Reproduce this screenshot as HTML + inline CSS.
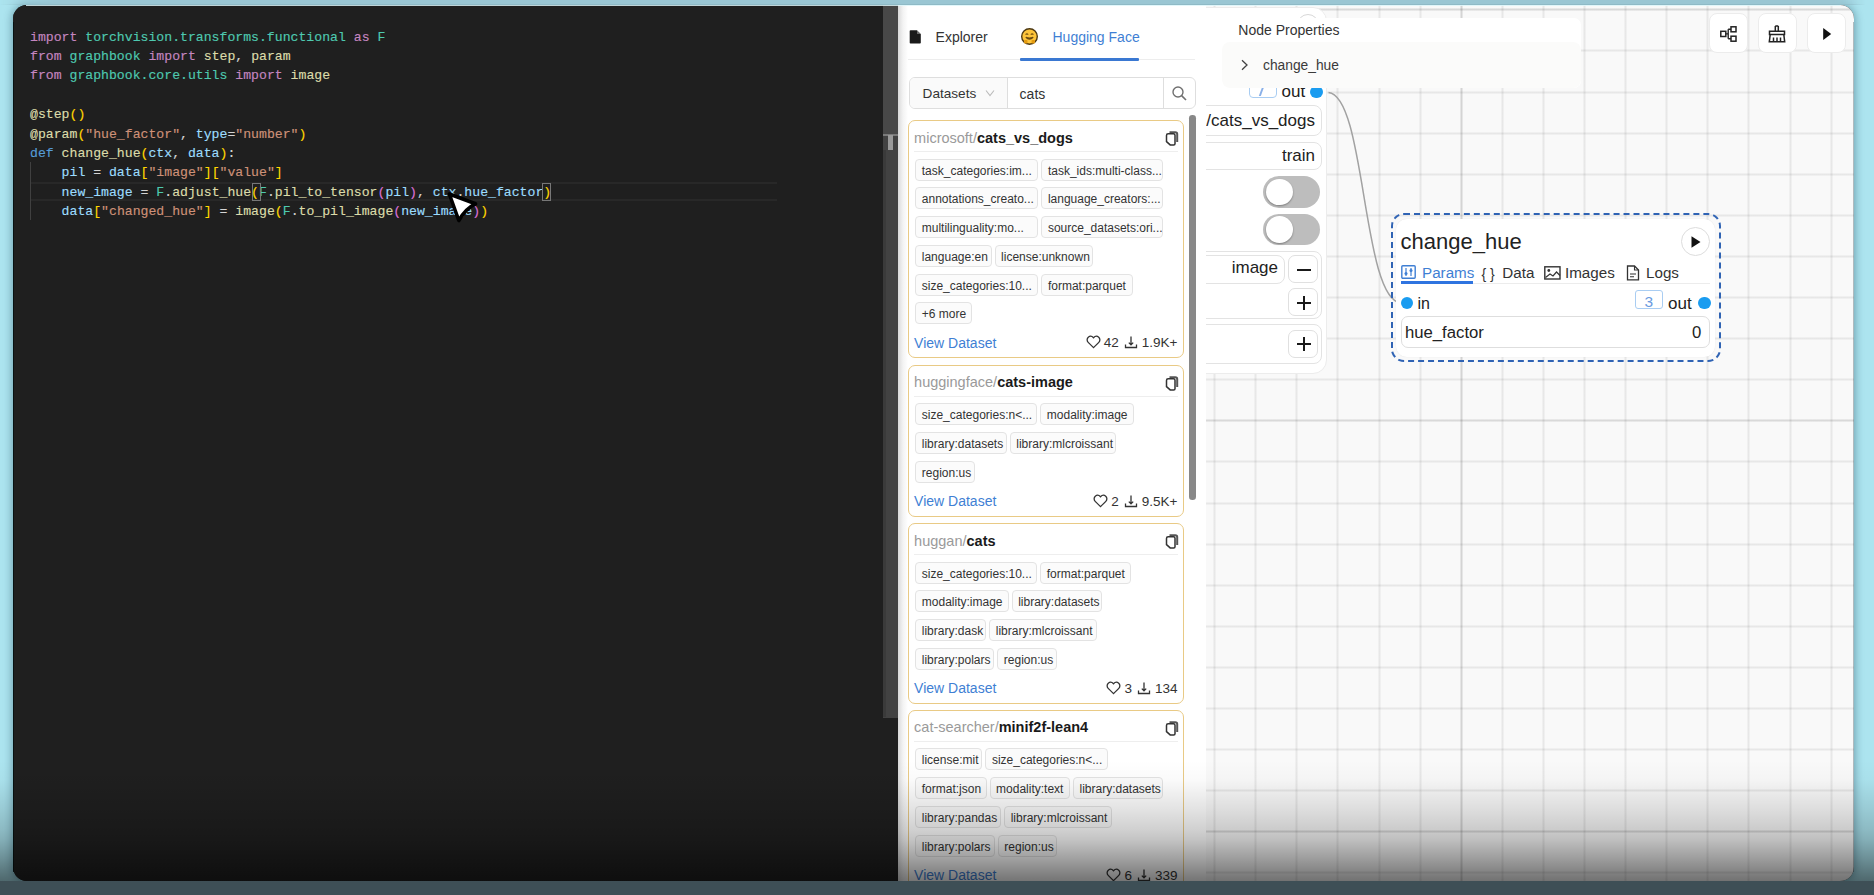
<!DOCTYPE html>
<html><head><meta charset="utf-8">
<style>
*{box-sizing:border-box}
html,body{margin:0;padding:0}
body{width:1874px;height:895px;overflow:hidden;position:relative;background:#ace4ef;font-family:"Liberation Sans",sans-serif}
.abs{position:absolute}
#bgtop{left:0;top:0;width:1874px;height:40px;background:linear-gradient(#93c2cf,#ace4ef)}
#win{left:13px;top:5px;width:1841px;height:876px;border-radius:14px;overflow:hidden;background:#1f1f1f;box-shadow:0 0 9px 1px rgba(10,50,70,.38)}
#editor{left:0;top:0;width:870px;height:876px;background:#1f1f1f}
.code{position:absolute;left:17px;top:0;font-family:"Liberation Mono",monospace;font-size:13.16px;line-height:19.35px;color:#d4d4d4;white-space:pre;-webkit-text-stroke:0.15px currentColor}
.kw{color:#c586c0}.md{color:#4ec9b0}.fn{color:#dcdcaa}.st{color:#ce9178}.vr{color:#9cdcfe}.df{color:#569cd6}.b1{color:#ffd700}.b2{color:#da70d6}.b3{color:#179fff}
#sbar{left:869.5px;top:0;width:15.5px;height:712.7px;background:#424242}
#side{left:885px;top:0;width:308px;height:876px;background:#fff}
#graph{left:1193px;top:0;width:648px;height:876px;background-color:#f9f9f9;overflow:hidden}
.t14{font-size:14px;line-height:18px;white-space:nowrap}
.card{width:276.6px;border:1.5px solid #e9ca85;border-radius:7px;background:#fff}
.ctitle{font-size:14.5px;line-height:18px;white-space:nowrap}
.ctitle b{font-weight:bold}
.tag{height:22px;border:1px solid #e3e3e3;border-radius:4px;background:#fbfbfb;font-size:12px;line-height:20px;padding-left:5.5px;padding-top:1px;color:#333;white-space:nowrap;overflow:hidden}
.vd{font-size:14px;line-height:18px;color:#3f7fd4;white-space:nowrap}
.stats{font-size:13.5px;line-height:18px;color:#333;white-space:nowrap}
.ntxt{font-size:17px;line-height:22px;color:#222;white-space:nowrap}
.ntxt2{font-size:16px;line-height:20px;color:#222;white-space:nowrap}
.ttab{top:257.6px;font-size:15.2px;line-height:20px;color:#333;white-space:nowrap}
.tog{width:57px;height:31.8px;border-radius:16px;background:#bdbdbd}
.knob{position:absolute;left:3px;top:2.6px;width:26.6px;height:26.6px;border-radius:50%;background:#fff;box-shadow:0 1px 2px rgba(0,0,0,.35)}
.nbtn{width:29.6px;border:1.8px solid #e0e0e0;border-radius:7px;background:#fff}
.dot{width:12.4px;height:12.4px;border-radius:50%;background:#1a9cf0}
.tbtn{width:39px;height:39.6px;background:#fff;border-radius:8px;border:1px solid #ececec}
</style></head><body>
<div id="win" class="abs">
  <div id="editor" class="abs">
    <div class="code" style="top:22.8px"><span class="kw">import</span> <span class="md">torchvision.transforms.functional</span> <span class="kw">as</span> <span class="md">F</span>
<span class="kw">from</span> <span class="md">graphbook</span> <span class="kw">import</span> <span class="fn">step</span>, <span class="fn">param</span>
<span class="kw">from</span> <span class="md">graphbook.core.utils</span> <span class="kw">import</span> <span class="fn">image</span>

<span class="fn">@step</span><span class="b1">()</span>
<span class="fn">@param</span><span class="b1">(</span><span class="st">"hue_factor"</span>, <span class="vr">type</span>=<span class="st">"number"</span><span class="b1">)</span>
<span class="df">def</span> <span class="fn">change_hue</span><span class="b1">(</span><span class="vr">ctx</span>, <span class="vr">data</span><span class="b1">)</span>:
    <span class="vr">pil</span> = <span class="vr">data</span><span class="b1">[</span><span class="st">"image"</span><span class="b1">][</span><span class="st">"value"</span><span class="b1">]</span>
    <span class="vr">new_image</span> = <span class="md">F</span>.<span class="fn">adjust_hue</span><span class="b1">(</span><span class="md">F</span>.<span class="fn">pil_to_tensor</span><span class="b2">(</span><span class="vr">pil</span><span class="b2">)</span>, <span class="vr">ctx</span>.<span class="vr">hue_factor</span><span class="b1">)</span>
    <span class="vr">data</span><span class="b1">[</span><span class="st">"changed_hue"</span><span class="b1">]</span> = <span class="fn">image</span><span class="b1">(</span><span class="md">F</span>.<span class="fn">to_pil_image</span><span class="b2">(</span><span class="vr">new_image</span><span class="b2">)</span><span class="b1">)</span>
</div>
    <div class="abs" style="left:17px;top:176.6px;width:747px;height:2px;background:#282828"></div>
    <div class="abs" style="left:17px;top:193.8px;width:747px;height:2px;background:#282828"></div>
    <div class="abs" style="left:17px;top:157px;width:1px;height:58px;background:#404040"></div>
    <div class="abs" style="left:238.8px;top:177.5px;width:9px;height:18px;border:1px solid #777"></div>
    <div class="abs" style="left:528.8px;top:177.5px;width:9px;height:18px;border:1px solid #777"></div>
    <svg class="abs" style="left:427px;top:180px" width="45" height="45" viewBox="0 0 45 45"><path d="M9.3 9L35.5 18.8Q25.5 23.5 18.8 35.5Z" fill="#fff" stroke="#000" stroke-width="3.6" stroke-linejoin="round"/></svg>
  </div>
  <div id="sbar" class="abs"><div class="abs" style="left:0;top:0;width:15.5px;height:129.5px;background:#484848"></div><div class="abs" style="left:0;top:129.3px;width:15.5px;height:1.8px;background:#7a7a7a"></div><div class="abs" style="left:5.5px;top:129.5px;width:5px;height:15.5px;background:#9a9a9a"></div><div class="abs" style="left:0;top:145px;width:3px;height:567px;background:#3a3a3a"></div></div>
  <div id="side" class="abs">
    <div class="abs" style="left:0;top:0;width:10px;height:876px;background:linear-gradient(90deg,#d9d9d9,#f3f3f3 50%,#fff)"></div>
    <svg class="abs" style="left:11px;top:24.2px" width="13" height="15" viewBox="0 0 13 15"><path d="M1.5 1.2h6.5l3.8 3.8v8.8c0 .5-.4.8-.8.8H1.5c-.5 0-.8-.3-.8-.8V2c0-.5.3-.8.8-.8z" fill="#1a1a1a"/><path d="M8 1.2v3.8h3.8" fill="#fff" opacity=".35"/></svg>
    <div class="abs t14" style="left:37.6px;top:23px;color:#333">Explorer</div>
    <svg class="abs" style="left:122px;top:22px" width="19" height="19" viewBox="0 0 19 19"><circle cx="9.5" cy="9.5" r="7.8" fill="#fdc43a" stroke="#4e3a14" stroke-width="1.4"/><path d="M5.6 7.6q1.3-1.4 2.6 0M10.8 7.6q1.3-1.4 2.6 0" stroke="#7a5510" stroke-width="1.3" fill="none"/><path d="M5.8 10.2q3.7 3.6 7.4 0q-3.7 1.6-7.4 0z" stroke="#6a4a10" stroke-width="1.2" fill="#6a4a10"/><rect x="4" y="13" width="3.5" height="3.5" rx="1" fill="#e39a10"/><rect x="11.5" y="13" width="3.5" height="3.5" rx="1" fill="#e39a10"/></svg>
    <div class="abs t14" style="left:154.5px;top:23px;color:#3f7fd4">Hugging Face</div>
    <div class="abs" style="left:10px;top:54px;width:287px;height:1px;background:#ededed"></div>
    <div class="abs" style="left:122.3px;top:53px;width:119px;height:2.5px;background:#3a78d2;border-radius:1px"></div>
    <div class="abs" style="left:10.6px;top:72px;width:287px;height:32px;border:1px solid #dedede;border-radius:6px;overflow:hidden">
      <div class="abs" style="left:0;top:0;width:98.2px;height:30px;background:#fafafa;border-right:1px solid #dedede"></div>
      <div class="abs t14" style="left:13px;top:7px;color:#333;font-size:13.6px">Datasets</div>
      <svg class="abs" style="left:75px;top:10.5px" width="10" height="9" viewBox="0 0 10 9"><path d="M1 1.5l4 5 4-5" stroke="#bbb" stroke-width="1.1" fill="none"/></svg>
      <div class="abs t14" style="left:110px;top:7px;color:#333;font-size:14px">cats</div>
      <div class="abs" style="left:253px;top:0;width:1px;height:30px;background:#dedede"></div>
      <svg class="abs" style="left:261.3px;top:7px" width="17" height="17" viewBox="0 0 17 17"><circle cx="7" cy="7" r="5" stroke="#707070" stroke-width="1.4" fill="none"/><path d="M10.6 10.6l4.4 4.4" stroke="#707070" stroke-width="1.6"/></svg>
    </div>
    <div class="abs" style="left:291.3px;top:110px;width:6.6px;height:385px;background:#888;border-radius:3.3px"></div>
<div class="card abs" style="left:9.9px;top:115.4px;height:237.8px"><div class="abs ctitle" style="left:5.2px;top:7.3px"><span style="color:#9a9a9a">microsoft/</span><b style="color:#1a1a1a">cats_vs_dogs</b></div><svg class="abs" style="left:256px;top:9px" width="14" height="16" viewBox="0 0 14 16"><path d="M4.5 2.2h5.8c1 0 1.9.8 1.9 1.8v8" stroke="#555" stroke-width="2" fill="none"/><path d="M3.2 3.8h5.3c.9 0 1.5.6 1.5 1.5v8.4c0 .8-.6 1.2-1.3 1.2H5.2L1.5 11.6V5.4c0-.9.8-1.6 1.7-1.6z" stroke="#333" stroke-width="1.5" fill="#fff"/></svg><div class="abs" style="left:5px;top:29.5px;width:264px;height:1px;background:#eee"></div><div class="tag abs" style="left:6.4px;top:37.4px;width:123.1px">task_categories:im...</div><div class="tag abs" style="left:132.5px;top:37.4px;width:122.1px">task_ids:multi-class...</div><div class="tag abs" style="left:6.4px;top:66.1px;width:123.1px">annotations_creato...</div><div class="tag abs" style="left:132.5px;top:66.1px;width:122.1px">language_creators:...</div><div class="tag abs" style="left:6.4px;top:94.8px;width:123.1px">multilinguality:mo...</div><div class="tag abs" style="left:132.5px;top:94.8px;width:122.1px">source_datasets:ori...</div><div class="tag abs" style="left:6.4px;top:123.5px;width:76.3px">language:en</div><div class="tag abs" style="left:85.7px;top:123.5px;width:98.6px">license:unknown</div><div class="tag abs" style="left:6.4px;top:152.2px;width:123.1px">size_categories:10...</div><div class="tag abs" style="left:132.5px;top:152.2px;width:91.4px">format:parquet</div><div class="tag abs" style="left:6.4px;top:180.9px;width:57.2px">+6 more</div><div class="abs vd" style="left:5.2px;top:212.3px">View Dataset</div><div class="abs stats" style="right:6px;top:212.9px"><svg width="15" height="14" viewBox="0 0 15 14" style="vertical-align:-2px"><path d="M7.5 12.6L2.2 7.4C.7 5.9.8 3.5 2.3 2.2 3.8.9 6 1.1 7.5 2.8 9 1.1 11.2.9 12.7 2.2c1.5 1.3 1.6 3.7.1 5.2z" stroke="#333" stroke-width="1.3" fill="none"/></svg><span style="margin:0 5px 0 3px">42</span><svg width="14" height="14" viewBox="0 0 14 14" style="vertical-align:-2px"><path d="M7 1.5v8M4.8 7.6L7 9.8l2.2-2.2M1.5 9.5v3h11v-3" stroke="#333" stroke-width="1.3" fill="none"/></svg><span style="margin-left:4px">1.9K+</span></div></div>
<div class="card abs" style="left:9.9px;top:360.0px;height:151.7px"><div class="abs ctitle" style="left:5.2px;top:7.3px"><span style="color:#9a9a9a">huggingface/</span><b style="color:#1a1a1a">cats-image</b></div><svg class="abs" style="left:256px;top:9px" width="14" height="16" viewBox="0 0 14 16"><path d="M4.5 2.2h5.8c1 0 1.9.8 1.9 1.8v8" stroke="#555" stroke-width="2" fill="none"/><path d="M3.2 3.8h5.3c.9 0 1.5.6 1.5 1.5v8.4c0 .8-.6 1.2-1.3 1.2H5.2L1.5 11.6V5.4c0-.9.8-1.6 1.7-1.6z" stroke="#333" stroke-width="1.5" fill="#fff"/></svg><div class="abs" style="left:5px;top:29.5px;width:264px;height:1px;background:#eee"></div><div class="tag abs" style="left:6.4px;top:37.4px;width:122.0px">size_categories:n&lt;...</div><div class="tag abs" style="left:131.4px;top:37.4px;width:93.4px">modality:image</div><div class="tag abs" style="left:6.4px;top:66.1px;width:91.5px">library:datasets</div><div class="tag abs" style="left:100.9px;top:66.1px;width:106.7px">library:mlcroissant</div><div class="tag abs" style="left:6.4px;top:94.8px;width:59.6px">region:us</div><div class="abs vd" style="left:5.2px;top:126.2px">View Dataset</div><div class="abs stats" style="right:6px;top:126.8px"><svg width="15" height="14" viewBox="0 0 15 14" style="vertical-align:-2px"><path d="M7.5 12.6L2.2 7.4C.7 5.9.8 3.5 2.3 2.2 3.8.9 6 1.1 7.5 2.8 9 1.1 11.2.9 12.7 2.2c1.5 1.3 1.6 3.7.1 5.2z" stroke="#333" stroke-width="1.3" fill="none"/></svg><span style="margin:0 5px 0 3px">2</span><svg width="14" height="14" viewBox="0 0 14 14" style="vertical-align:-2px"><path d="M7 1.5v8M4.8 7.6L7 9.8l2.2-2.2M1.5 9.5v3h11v-3" stroke="#333" stroke-width="1.3" fill="none"/></svg><span style="margin-left:4px">9.5K+</span></div></div>
<div class="card abs" style="left:9.9px;top:518.3px;height:180.4px"><div class="abs ctitle" style="left:5.2px;top:7.3px"><span style="color:#9a9a9a">huggan/</span><b style="color:#1a1a1a">cats</b></div><svg class="abs" style="left:256px;top:9px" width="14" height="16" viewBox="0 0 14 16"><path d="M4.5 2.2h5.8c1 0 1.9.8 1.9 1.8v8" stroke="#555" stroke-width="2" fill="none"/><path d="M3.2 3.8h5.3c.9 0 1.5.6 1.5 1.5v8.4c0 .8-.6 1.2-1.3 1.2H5.2L1.5 11.6V5.4c0-.9.8-1.6 1.7-1.6z" stroke="#333" stroke-width="1.5" fill="#fff"/></svg><div class="abs" style="left:5px;top:29.5px;width:264px;height:1px;background:#eee"></div><div class="tag abs" style="left:6.4px;top:37.4px;width:122.0px">size_categories:10...</div><div class="tag abs" style="left:131.4px;top:37.4px;width:91.0px">format:parquet</div><div class="tag abs" style="left:6.4px;top:66.1px;width:93.4px">modality:image</div><div class="tag abs" style="left:102.8px;top:66.1px;width:90.4px">library:datasets</div><div class="tag abs" style="left:6.4px;top:94.8px;width:71.0px">library:dask</div><div class="tag abs" style="left:80.4px;top:94.8px;width:107.9px">library:mlcroissant</div><div class="tag abs" style="left:6.4px;top:123.5px;width:79.0px">library:polars</div><div class="tag abs" style="left:88.4px;top:123.5px;width:60.0px">region:us</div><div class="abs vd" style="left:5.2px;top:154.9px">View Dataset</div><div class="abs stats" style="right:6px;top:155.5px"><svg width="15" height="14" viewBox="0 0 15 14" style="vertical-align:-2px"><path d="M7.5 12.6L2.2 7.4C.7 5.9.8 3.5 2.3 2.2 3.8.9 6 1.1 7.5 2.8 9 1.1 11.2.9 12.7 2.2c1.5 1.3 1.6 3.7.1 5.2z" stroke="#333" stroke-width="1.3" fill="none"/></svg><span style="margin:0 5px 0 3px">3</span><svg width="14" height="14" viewBox="0 0 14 14" style="vertical-align:-2px"><path d="M7 1.5v8M4.8 7.6L7 9.8l2.2-2.2M1.5 9.5v3h11v-3" stroke="#333" stroke-width="1.3" fill="none"/></svg><span style="margin-left:4px">134</span></div></div>
<div class="card abs" style="left:9.9px;top:705.0px;height:180.4px"><div class="abs ctitle" style="left:5.2px;top:7.3px"><span style="color:#9a9a9a">cat-searcher/</span><b style="color:#1a1a1a">minif2f-lean4</b></div><svg class="abs" style="left:256px;top:9px" width="14" height="16" viewBox="0 0 14 16"><path d="M4.5 2.2h5.8c1 0 1.9.8 1.9 1.8v8" stroke="#555" stroke-width="2" fill="none"/><path d="M3.2 3.8h5.3c.9 0 1.5.6 1.5 1.5v8.4c0 .8-.6 1.2-1.3 1.2H5.2L1.5 11.6V5.4c0-.9.8-1.6 1.7-1.6z" stroke="#333" stroke-width="1.5" fill="#fff"/></svg><div class="abs" style="left:5px;top:29.5px;width:264px;height:1px;background:#eee"></div><div class="tag abs" style="left:6.4px;top:37.4px;width:67.1px">license:mit</div><div class="tag abs" style="left:76.5px;top:37.4px;width:122.8px">size_categories:n&lt;...</div><div class="tag abs" style="left:6.4px;top:66.1px;width:71.3px">format:json</div><div class="tag abs" style="left:80.7px;top:66.1px;width:80.4px">modality:text</div><div class="tag abs" style="left:164.1px;top:66.1px;width:90.5px">library:datasets</div><div class="tag abs" style="left:6.4px;top:94.8px;width:85.9px">library:pandas</div><div class="tag abs" style="left:95.3px;top:94.8px;width:108.1px">library:mlcroissant</div><div class="tag abs" style="left:6.4px;top:123.5px;width:79.5px">library:polars</div><div class="tag abs" style="left:88.9px;top:123.5px;width:59.1px">region:us</div><div class="abs vd" style="left:5.2px;top:154.9px">View Dataset</div><div class="abs stats" style="right:6px;top:155.5px"><svg width="15" height="14" viewBox="0 0 15 14" style="vertical-align:-2px"><path d="M7.5 12.6L2.2 7.4C.7 5.9.8 3.5 2.3 2.2 3.8.9 6 1.1 7.5 2.8 9 1.1 11.2.9 12.7 2.2c1.5 1.3 1.6 3.7.1 5.2z" stroke="#333" stroke-width="1.3" fill="none"/></svg><span style="margin:0 5px 0 3px">6</span><svg width="14" height="14" viewBox="0 0 14 14" style="vertical-align:-2px"><path d="M7 1.5v8M4.8 7.6L7 9.8l2.2-2.2M1.5 9.5v3h11v-3" stroke="#333" stroke-width="1.3" fill="none"/></svg><span style="margin-left:4px">339</span></div></div>
  </div>
  <div id="graph" class="abs"><div class="abs" style="left:7.1px;top:0;width:3px;height:876px;background:linear-gradient(90deg,rgba(0,0,0,.02),rgba(0,0,0,.07),rgba(0,0,0,.02))"></div><div class="abs" style="left:48.2px;top:0;width:3px;height:876px;background:linear-gradient(90deg,rgba(0,0,0,.02),rgba(0,0,0,.07),rgba(0,0,0,.02))"></div><div class="abs" style="left:89.3px;top:0;width:3px;height:876px;background:linear-gradient(90deg,rgba(0,0,0,.02),rgba(0,0,0,.07),rgba(0,0,0,.02))"></div><div class="abs" style="left:130.4px;top:0;width:3px;height:876px;background:linear-gradient(90deg,rgba(0,0,0,.02),rgba(0,0,0,.07),rgba(0,0,0,.02))"></div><div class="abs" style="left:171.5px;top:0;width:3px;height:876px;background:linear-gradient(90deg,rgba(0,0,0,.02),rgba(0,0,0,.07),rgba(0,0,0,.02))"></div><div class="abs" style="left:212.6px;top:0;width:3px;height:876px;background:linear-gradient(90deg,rgba(0,0,0,.02),rgba(0,0,0,.07),rgba(0,0,0,.02))"></div><div class="abs" style="left:253.7px;top:0;width:3px;height:876px;background:linear-gradient(90deg,rgba(0,0,0,.04),rgba(0,0,0,.15),rgba(0,0,0,.04))"></div><div class="abs" style="left:294.8px;top:0;width:3px;height:876px;background:linear-gradient(90deg,rgba(0,0,0,.02),rgba(0,0,0,.07),rgba(0,0,0,.02))"></div><div class="abs" style="left:335.9px;top:0;width:3px;height:876px;background:linear-gradient(90deg,rgba(0,0,0,.02),rgba(0,0,0,.07),rgba(0,0,0,.02))"></div><div class="abs" style="left:377.0px;top:0;width:3px;height:876px;background:linear-gradient(90deg,rgba(0,0,0,.02),rgba(0,0,0,.07),rgba(0,0,0,.02))"></div><div class="abs" style="left:418.1px;top:0;width:3px;height:876px;background:linear-gradient(90deg,rgba(0,0,0,.02),rgba(0,0,0,.07),rgba(0,0,0,.02))"></div><div class="abs" style="left:459.2px;top:0;width:3px;height:876px;background:linear-gradient(90deg,rgba(0,0,0,.02),rgba(0,0,0,.07),rgba(0,0,0,.02))"></div><div class="abs" style="left:500.3px;top:0;width:3px;height:876px;background:linear-gradient(90deg,rgba(0,0,0,.02),rgba(0,0,0,.07),rgba(0,0,0,.02))"></div><div class="abs" style="left:541.4px;top:0;width:3px;height:876px;background:linear-gradient(90deg,rgba(0,0,0,.02),rgba(0,0,0,.07),rgba(0,0,0,.02))"></div><div class="abs" style="left:582.5px;top:0;width:3px;height:876px;background:linear-gradient(90deg,rgba(0,0,0,.02),rgba(0,0,0,.07),rgba(0,0,0,.02))"></div><div class="abs" style="left:623.6px;top:0;width:3px;height:876px;background:linear-gradient(90deg,rgba(0,0,0,.02),rgba(0,0,0,.07),rgba(0,0,0,.02))"></div><div class="abs" style="left:0;top:3.3px;width:648px;height:3px;background:linear-gradient(rgba(0,0,0,.035),rgba(0,0,0,.13),rgba(0,0,0,.035))"></div><div class="abs" style="left:0;top:44.4px;width:648px;height:3px;background:linear-gradient(rgba(0,0,0,.02),rgba(0,0,0,.07),rgba(0,0,0,.02))"></div><div class="abs" style="left:0;top:85.5px;width:648px;height:3px;background:linear-gradient(rgba(0,0,0,.02),rgba(0,0,0,.07),rgba(0,0,0,.02))"></div><div class="abs" style="left:0;top:126.6px;width:648px;height:3px;background:linear-gradient(rgba(0,0,0,.02),rgba(0,0,0,.07),rgba(0,0,0,.02))"></div><div class="abs" style="left:0;top:167.7px;width:648px;height:3px;background:linear-gradient(rgba(0,0,0,.02),rgba(0,0,0,.07),rgba(0,0,0,.02))"></div><div class="abs" style="left:0;top:208.8px;width:648px;height:3px;background:linear-gradient(rgba(0,0,0,.02),rgba(0,0,0,.07),rgba(0,0,0,.02))"></div><div class="abs" style="left:0;top:249.9px;width:648px;height:3px;background:linear-gradient(rgba(0,0,0,.02),rgba(0,0,0,.07),rgba(0,0,0,.02))"></div><div class="abs" style="left:0;top:291.0px;width:648px;height:3px;background:linear-gradient(rgba(0,0,0,.02),rgba(0,0,0,.07),rgba(0,0,0,.02))"></div><div class="abs" style="left:0;top:332.1px;width:648px;height:3px;background:linear-gradient(rgba(0,0,0,.02),rgba(0,0,0,.07),rgba(0,0,0,.02))"></div><div class="abs" style="left:0;top:373.2px;width:648px;height:3px;background:linear-gradient(rgba(0,0,0,.02),rgba(0,0,0,.07),rgba(0,0,0,.02))"></div><div class="abs" style="left:0;top:414.3px;width:648px;height:3px;background:linear-gradient(rgba(0,0,0,.035),rgba(0,0,0,.13),rgba(0,0,0,.035))"></div><div class="abs" style="left:0;top:455.4px;width:648px;height:3px;background:linear-gradient(rgba(0,0,0,.02),rgba(0,0,0,.07),rgba(0,0,0,.02))"></div><div class="abs" style="left:0;top:496.5px;width:648px;height:3px;background:linear-gradient(rgba(0,0,0,.02),rgba(0,0,0,.07),rgba(0,0,0,.02))"></div><div class="abs" style="left:0;top:537.6px;width:648px;height:3px;background:linear-gradient(rgba(0,0,0,.02),rgba(0,0,0,.07),rgba(0,0,0,.02))"></div><div class="abs" style="left:0;top:578.7px;width:648px;height:3px;background:linear-gradient(rgba(0,0,0,.02),rgba(0,0,0,.07),rgba(0,0,0,.02))"></div><div class="abs" style="left:0;top:619.8px;width:648px;height:3px;background:linear-gradient(rgba(0,0,0,.02),rgba(0,0,0,.07),rgba(0,0,0,.02))"></div><div class="abs" style="left:0;top:660.9px;width:648px;height:3px;background:linear-gradient(rgba(0,0,0,.02),rgba(0,0,0,.07),rgba(0,0,0,.02))"></div><div class="abs" style="left:0;top:702.0px;width:648px;height:3px;background:linear-gradient(rgba(0,0,0,.02),rgba(0,0,0,.07),rgba(0,0,0,.02))"></div><div class="abs" style="left:0;top:743.1px;width:648px;height:3px;background:linear-gradient(rgba(0,0,0,.02),rgba(0,0,0,.07),rgba(0,0,0,.02))"></div><div class="abs" style="left:0;top:784.2px;width:648px;height:3px;background:linear-gradient(rgba(0,0,0,.02),rgba(0,0,0,.07),rgba(0,0,0,.02))"></div><div class="abs" style="left:0;top:825.3px;width:648px;height:3px;background:linear-gradient(rgba(0,0,0,.035),rgba(0,0,0,.13),rgba(0,0,0,.035))"></div><div class="abs" style="left:0;top:866.4px;width:648px;height:3px;background:linear-gradient(rgba(0,0,0,.02),rgba(0,0,0,.07),rgba(0,0,0,.02))"></div>
    <!-- left node -->
    <div class="abs" style="left:-20px;top:1.5px;width:141.3px;height:367.1px;background:#fff;border-radius:14px;border:1px solid #ececec"></div>
    <div class="abs" style="left:91.0px;top:8.5px;width:22px;height:22px;border:1.5px solid #d8d8d8;border-radius:50%"></div>
    <div class="abs" style="left:-20px;top:99.8px;width:135.6px;height:31.2px;border:1.8px solid #e3e3e3;border-radius:8px"></div>
    <div class="abs ntxt" style="right:539.0px;top:104.6px">/cats_vs_dogs</div>
    <div class="abs" style="left:-20px;top:136.6px;width:135.6px;height:28.8px;border:1.8px solid #e3e3e3;border-radius:8px"></div>
    <div class="abs ntxt" style="right:539.0px;top:139.5px">train</div>
    <div class="abs tog" style="left:57.4px;top:171.3px"><div class="knob"></div></div>
    <div class="abs tog" style="left:57.4px;top:208.7px"><div class="knob"></div></div>
    <div class="abs" style="left:-20px;top:245.7px;width:136.0px;height:68.2px;border:1.8px solid #e3e3e3;border-radius:8px"></div>
    <div class="abs" style="left:-20px;top:249.8px;width:98.5px;height:29.1px;border:1.8px solid #e3e3e3;border-radius:8px"></div>
    <div class="abs ntxt" style="right:576.0px;top:252.0px">image</div>
    <div class="abs nbtn" style="left:82.4px;top:249.8px;height:28.5px"><div class="abs" style="left:7.5px;top:13px;width:14px;height:1.8px;background:#1a1a1a"></div></div>
    <div class="abs nbtn" style="left:82.4px;top:283.4px;height:27.5px"><div class="abs" style="left:7.5px;top:12.5px;width:14px;height:1.8px;background:#1a1a1a"></div><div class="abs" style="left:13.6px;top:6.5px;width:1.8px;height:14px;background:#1a1a1a"></div></div>
    <div class="abs" style="left:-20px;top:319.2px;width:136.0px;height:40px;border:1.8px solid #e3e3e3;border-radius:8px"></div>
    <div class="abs nbtn" style="left:82.4px;top:324.5px;height:28px"><div class="abs" style="left:7.5px;top:12.6px;width:14px;height:1.8px;background:#1a1a1a"></div><div class="abs" style="left:13.6px;top:6.5px;width:1.8px;height:14px;background:#1a1a1a"></div></div>
    <div class="abs" style="left:43.0px;top:78.0px;width:28px;height:14.6px;border:1.6px solid #a9cdf2;border-radius:4px"></div>
    <div class="abs" style="left:55.0px;top:79.0px;width:2px;height:12px;background:#8ab0e8;transform:skewX(-20deg)"></div>
    <div class="abs ntxt" style="left:75.5px;top:75.5px;font-size:17px">out</div>
    <div class="abs dot" style="left:104.4px;top:80.9px"></div>
    <!-- edge -->
    <svg class="abs" style="left:0;top:0" width="648" height="876"><path d="M122.5 87.5 C 160.0 91.0, 156.0 295.0, 195.0 298.0" stroke="#a2a2a2" stroke-width="1.5" fill="none"/></svg>
    <!-- node properties -->
    <div class="abs" style="left:16.0px;top:12.8px;width:358.8px;height:69.8px;background:#fff;border-radius:7px;overflow:hidden">
      <div class="abs" style="left:0;top:24.0px;width:100%;height:45.8px;background:#fbfbfa;border-radius:8px"></div>
    </div>
    <div class="abs" style="left:32.3px;top:16.0px;font-size:14px;line-height:18px;color:#333;white-space:nowrap">Node Properties</div>
    <svg class="abs" style="left:33.5px;top:54.0px" width="10" height="12" viewBox="0 0 10 12"><path d="M2 1.2l5 4.8-5 4.8" stroke="#444" stroke-width="1.3" fill="none"/></svg>
    <div class="abs" style="left:57.0px;top:51.8px;font-size:13.8px;line-height:18px;color:#3a3a3a;white-space:nowrap">change_hue</div>
    <!-- change_hue node -->
    <div class="abs" style="left:184.5px;top:208.2px;width:330.9px;height:149.2px;border:2.2px dashed #2f63b4;border-radius:13px"></div>
    <div class="abs" style="left:190.0px;top:214.0px;width:319.0px;height:138.0px;background:#fff;border-radius:11px;box-shadow:0 0 1px rgba(0,0,0,.12)"></div>
    <div class="abs" style="left:194.5px;top:224.1px;font-size:22px;line-height:26px;color:#222;white-space:nowrap">change_hue</div>
    <div class="abs" style="left:474.5px;top:221.6px;width:29px;height:29px;border:1.5px solid #dcdcdc;border-radius:50%"></div>
    <svg class="abs" style="left:484.0px;top:229.5px" width="12" height="14" viewBox="0 0 12 14"><path d="M1.5 1.2L10.5 7 1.5 12.8z" fill="#111"/></svg>
    <div class="abs" style="left:195.0px;top:278.0px;width:309px;height:1px;background:#ececec"></div>
    <div class="abs" style="left:195.4px;top:275.8px;width:71.7px;height:3.6px;background:#2f74e0"></div>
    <svg class="abs" style="left:195.4px;top:260.0px" width="15" height="14" viewBox="0 0 15 14"><rect x=".8" y=".8" width="13.4" height="12.4" rx="1" stroke="#3f7fd4" stroke-width="1.4" fill="none"/><path d="M5 3v8M10 3v8" stroke="#3f7fd4" stroke-width="1.2"/><circle cx="5" cy="8.5" r="1.5" fill="#3f7fd4"/><circle cx="10" cy="5.5" r="1.5" fill="#3f7fd4"/></svg>
    <div class="abs ttab" style="left:216.0px;color:#3f7fd4">Params</div>
    <div class="abs ttab" style="left:275.5px;font-size:14px;top:258.5px">{ }</div>
    <div class="abs ttab" style="left:296.3px">Data</div>
    <svg class="abs" style="left:338.0px;top:260.5px" width="17" height="14" viewBox="0 0 17 14"><rect x=".8" y=".8" width="15.2" height="12.2" stroke="#333" stroke-width="1.4" fill="none"/><circle cx="4.8" cy="4.5" r="1.4" fill="#333"/><path d="M1.5 11.5l4.5-3.5 3 2 3.5-4 3.5 3.5" stroke="#333" stroke-width="1.2" fill="none"/></svg>
    <div class="abs ttab" style="left:359.0px">Images</div>
    <svg class="abs" style="left:420.0px;top:259.5px" width="14" height="16" viewBox="0 0 14 16"><path d="M1.5 1h7l4 4v9.8H1.5z" stroke="#333" stroke-width="1.3" fill="none"/><path d="M8.5 1v4h4M4 9h6M4 11.8h4" stroke="#333" stroke-width="1.1" fill="none"/></svg>
    <div class="abs ttab" style="left:440.0px">Logs</div>
    <div class="abs dot" style="left:194.5px;top:291.6px"></div>
    <div class="abs ntxt2" style="left:211.5px;top:289.0px">in</div>
    <div class="abs" style="left:429.0px;top:285.0px;width:27.6px;height:18.8px;border:1.3px solid #a9cdf2;border-radius:3px;font-size:15.5px;line-height:21px;text-align:center;color:#6b9be0">3</div>
    <div class="abs ntxt2" style="left:462.0px;top:289.0px;font-size:17px">out</div>
    <div class="abs dot" style="left:492.4px;top:291.6px"></div>
    <div class="abs" style="left:195.0px;top:311.3px;width:308.8px;height:31.5px;border:1.5px solid #dedede;border-radius:7px"></div>
    <div class="abs ntxt2" style="left:199.0px;top:318.0px;font-size:16.7px">hue_factor</div>
    <div class="abs ntxt2" style="left:486.0px;top:318.0px;font-size:16.7px">0</div>
    <!-- toolbar -->
    <div class="abs tbtn" style="left:502.6px;top:8.4px"><svg class="abs" style="left:9px;top:10.3px" width="20" height="18" viewBox="0 0 20 18"><rect x="1.8" y="6.3" width="5" height="5.2" stroke="#222" stroke-width="1.5" fill="none"/><rect x="12" y="1.8" width="5" height="5" stroke="#222" stroke-width="1.5" fill="none"/><rect x="12" y="11.2" width="5" height="5" stroke="#222" stroke-width="1.5" fill="none"/><path d="M6.8 8.9h2.4M9.2 4.3v9.4M9.2 4.3H12M9.2 13.7H12" stroke="#222" stroke-width="1.4" fill="none"/></svg></div>
    <div class="abs tbtn" style="left:551.8px;top:8.4px"><svg class="abs" style="left:9.5px;top:10.3px" width="18" height="18" viewBox="0 0 18 18"><path d="M7.3 1v5M10.3 1v5M7.3 1h3" stroke="#222" stroke-width="1.5" fill="none"/><path d="M1.5 6.3h15v3.2h-15zM2.2 9.5L1.3 16.8h15.4l-.9-7.3M5.5 12.5v4.3M9 12.5v4.3M12.5 12.5v4.3" stroke="#222" stroke-width="1.5" fill="none"/></svg></div>
    <div class="abs tbtn" style="left:601.1px;top:8.4px"><svg class="abs" style="left:13.5px;top:12.6px" width="10" height="14" viewBox="0 0 10 14"><path d="M1.2 1L9.2 7 1.2 13z" fill="#111"/></svg></div>
  </div>
</div>
<div class="abs" style="left:0;top:0;width:1874px;height:4.5px;background:#9ac6d3;-webkit-mask-image:linear-gradient(90deg,transparent 0px,#000 60px,#000 1835px,transparent 1865px)"></div>
<div class="abs" style="left:0;top:3.5px;width:1874px;height:1.2px;background:#8fbac6;-webkit-mask-image:linear-gradient(90deg,transparent 0px,#000 60px,#000 1835px,transparent 1865px)"></div>
<div class="abs" style="left:26px;top:4.6px;width:1814px;height:1px;background:rgba(220,246,250,.85)"></div>
<div class="abs" style="left:13px;top:22px;width:1.2px;height:850px;background:rgba(0,15,15,.75)"></div>
<div class="abs" style="left:1853.3px;top:22px;width:1px;height:850px;background:rgba(40,70,80,.35)"></div>
<div class="abs" style="left:0;top:760px;width:1874px;height:121px;background:linear-gradient(to bottom,rgba(0,0,0,0) 0px,rgba(0,0,0,.02) 20px,rgba(0,0,0,.05) 30px,rgba(0,0,0,.113) 50px,rgba(0,0,0,.185) 70px,rgba(0,0,0,.234) 80px,rgba(0,0,0,.38) 100px,rgba(0,0,0,.52) 118px,rgba(0,0,0,.54) 121px)"></div>
<div class="abs" style="left:0;top:881px;width:1874px;height:14px;background:#3e4f56"></div>
</body></html>
